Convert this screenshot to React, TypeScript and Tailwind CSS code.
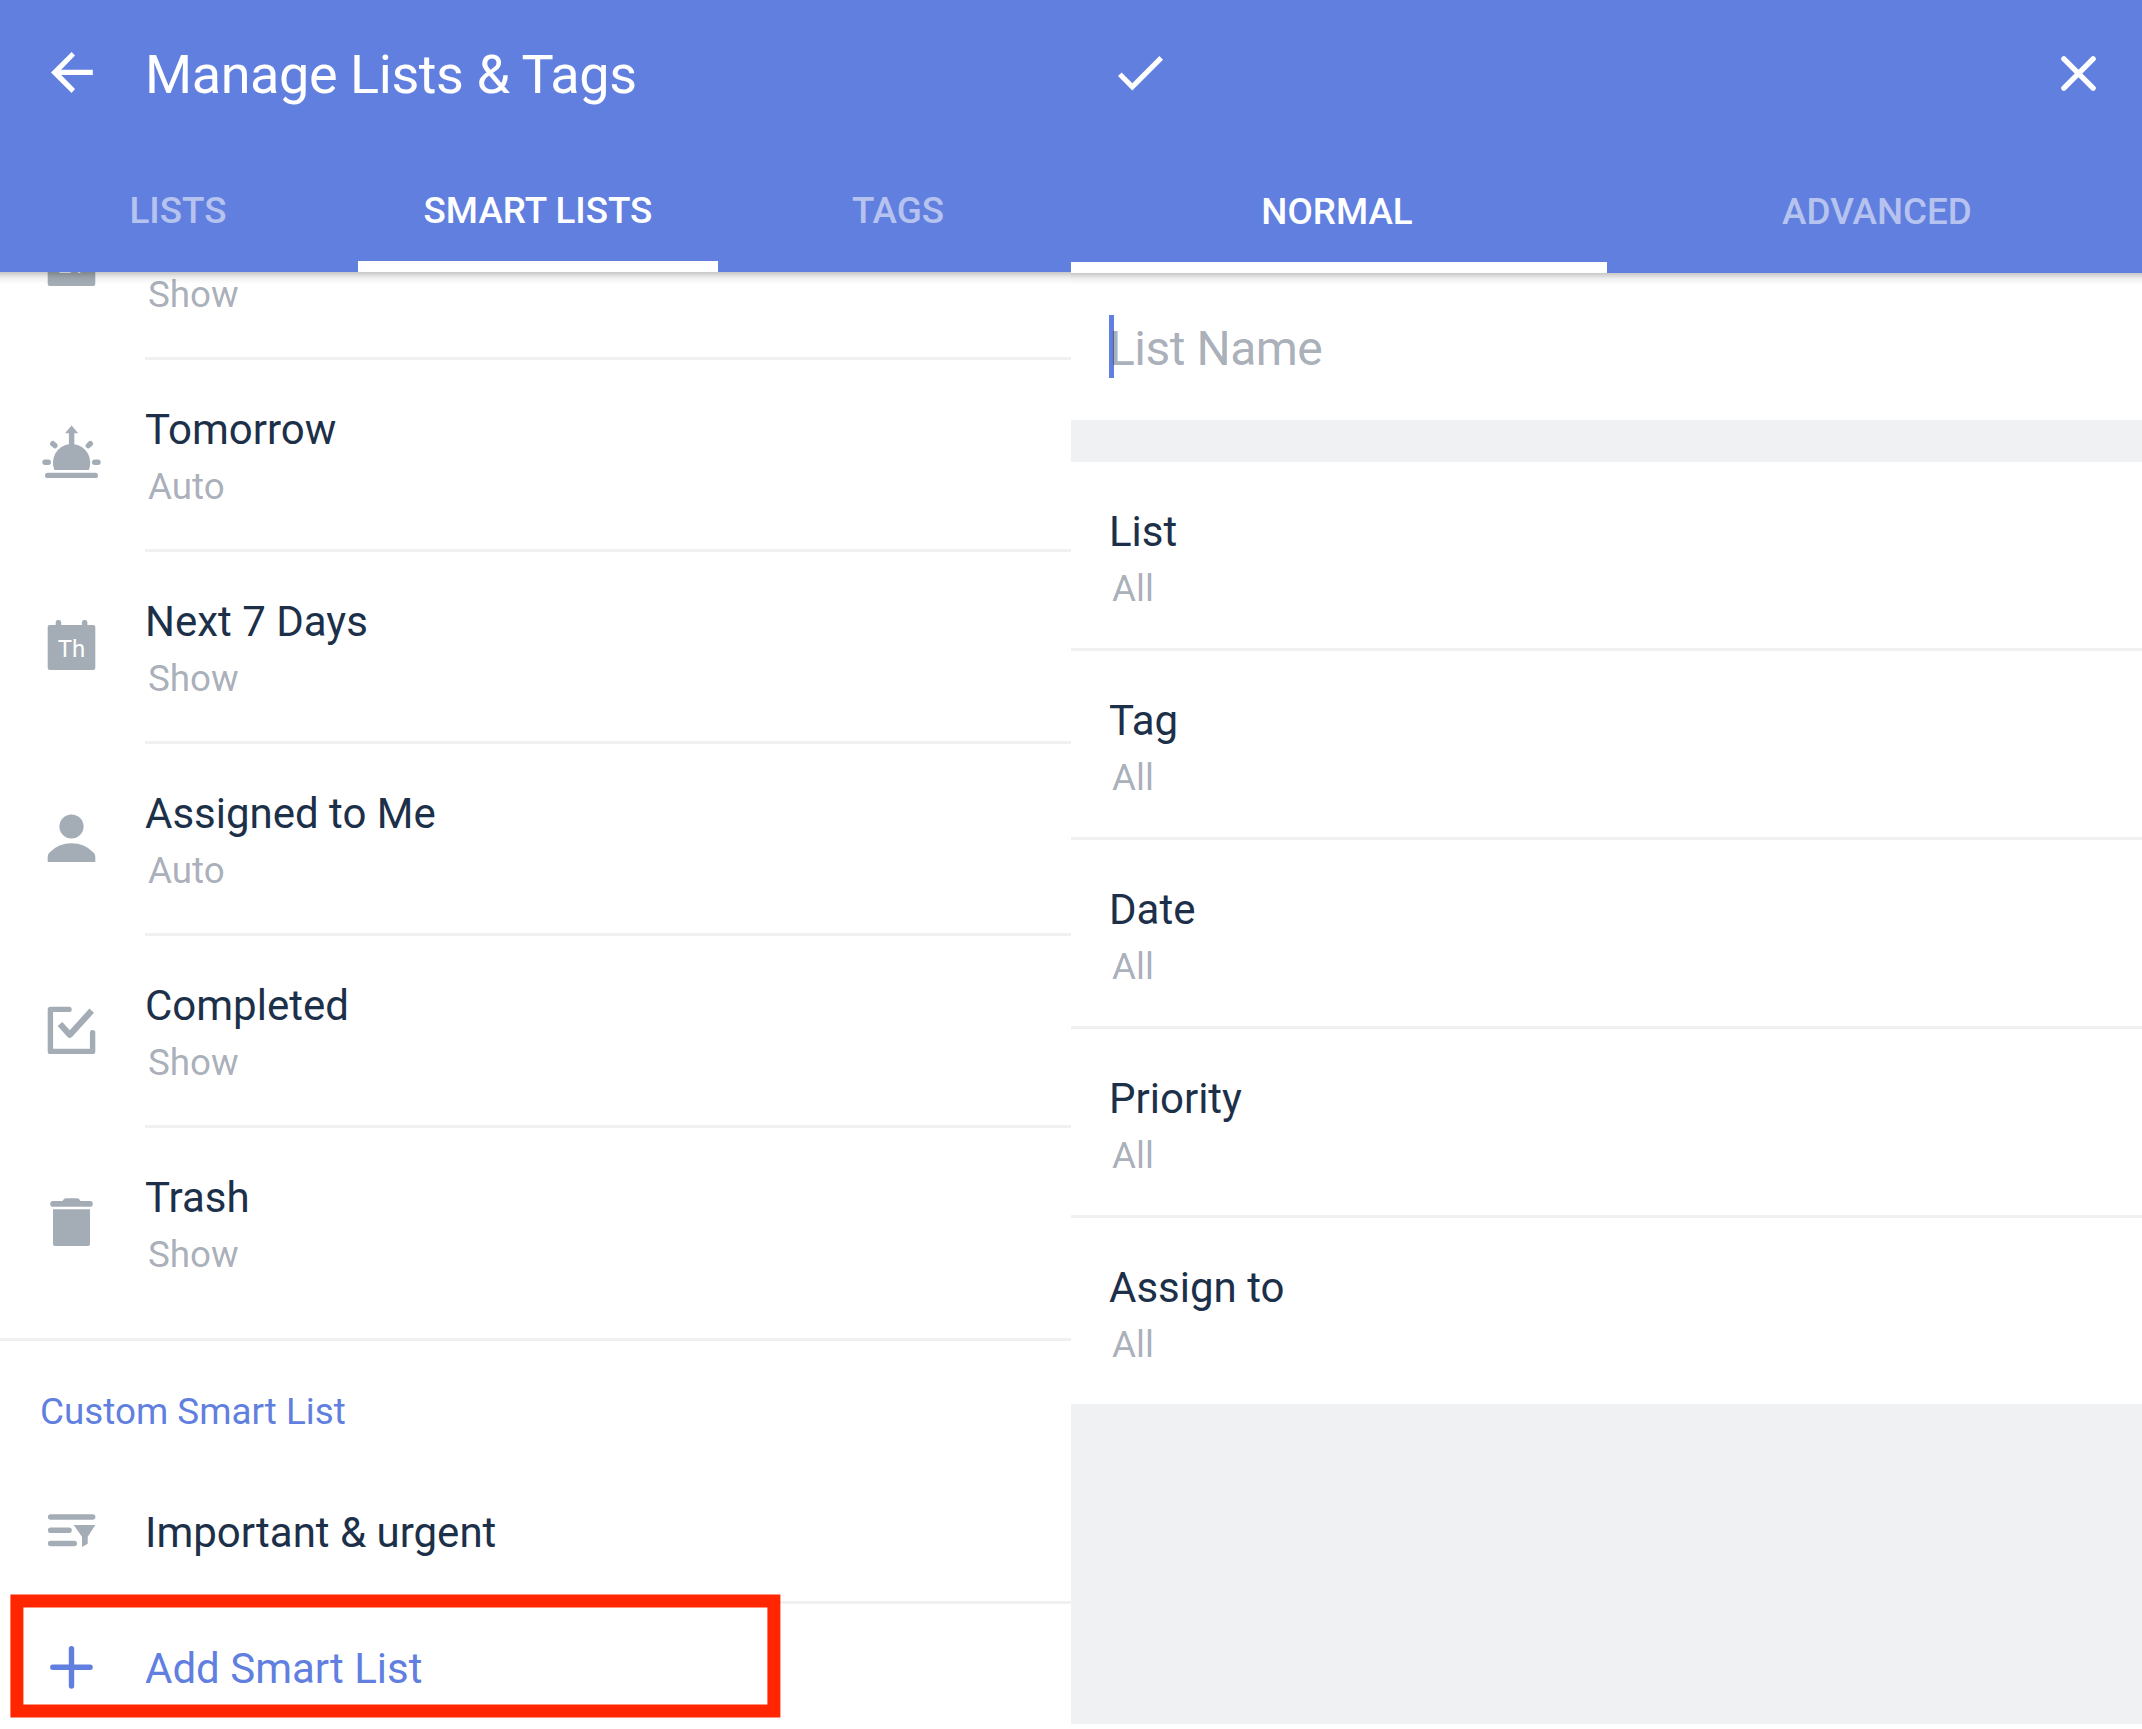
import type { ReactNode } from "react";

function Icon({ children }: { children: ReactNode }) {
  return (
    <svg className="block h-[72px] w-[72px]" viewBox="0 0 72 72" fill="none">
      {children}
    </svg>
  );
}

function CalendarIcon({ label }: { label: string }) {
  return (
    <Icon>
      <rect x="11.7" y="15" width="47.6" height="45" rx="2" fill="#a4adb6" />
      <rect x="19.7" y="10" width="5.5" height="9" rx="2.4" fill="#a4adb6" />
      <rect x="45.9" y="10" width="5.5" height="9" rx="2.4" fill="#a4adb6" />
      <text x="35.5" y="46.7" fill="#fff" fontSize="24" textAnchor="middle">
        {label}
      </text>
    </Icon>
  );
}

function SunriseIcon() {
  return (
    <Icon>
      <path
        d="M18.4 52A18.7 18.7 0 0 1 32.9 26.2V15.3H29L35.6 7.6L42.2 15.3H38.3V26.2A18.7 18.7 0 0 1 52.8 52Z"
        fill="#a4adb6"
      />
      <path
        d="M11.7 57.4H59.3M9 44.2H12.3M58.7 44.2H62M16.8 25.7L18.9 27.6M54.3 25.7L52.3 27.6"
        stroke="#a4adb6"
        strokeWidth="5.4"
        strokeLinecap="round"
      />
    </Icon>
  );
}

function PersonIcon() {
  return (
    <Icon>
      <circle cx="35.5" cy="24.5" r="12.1" fill="#a4adb6" />
      <path
        d="M11.7 60V54.5Q11.7 52 13.6 50.4Q22.5 41.3 35.5 41.3Q48.5 41.3 57.4 50.4Q59.3 52 59.3 54.5V60Z"
        fill="#a4adb6"
      />
    </Icon>
  );
}

function CompletedIcon() {
  return (
    <Icon>
      <path
        d="M33 15.4H14.4V57.4H56.6V38.8"
        stroke="#a4adb6"
        strokeWidth="5.4"
        strokeLinecap="round"
        strokeLinejoin="round"
      />
      <path d="M24 30L33.7 40.8L55.7 16.7" stroke="#a4adb6" strokeWidth="6.2" strokeLinejoin="round" />
    </Icon>
  );
}

function TrashIcon() {
  return (
    <Icon>
      <path d="M17 17.9H54" stroke="#a4adb6" strokeWidth="5.6" strokeLinecap="round" />
      <path d="M26.2 16Q27.5 12.3 30 12.3H41Q43.5 12.3 44.8 16Z" fill="#a4adb6" />
      <path d="M17 23.3H54V58Q54 60 52 60H19Q17 60 17 58Z" fill="#a4adb6" />
    </Icon>
  );
}

function FilterIcon() {
  return (
    <Icon>
      <path
        d="M14.7 21H56.6M14.7 34.3H33M14.7 47.5H38.2"
        stroke="#a4adb6"
        strokeWidth="5.6"
        strokeLinecap="round"
      />
      <path d="M37.7 29H59.3L51.7 40.7V47.7L46 51V40.7Z" fill="#a4adb6" />
    </Icon>
  );
}

function PlusIcon() {
  return (
    <Icon>
      <path d="M16.8 35.3H54.1M35.5 16.7V54" stroke="#617fdf" strokeWidth="5.4" strokeLinecap="round" />
    </Icon>
  );
}

function ItemText({ title, sub }: { title?: string; sub: string }) {
  return (
    <div className="pt-[45px]">
      <div className="h-[49px] text-[42px] leading-[49px] text-[#1d3049]">{title}</div>
      <div className="mt-[11px] pl-[3px] text-[36.8px] leading-[43px] text-[#1d3049]/40">{sub}</div>
    </div>
  );
}

const smartLists: { title?: string; sub: string; icon: ReactNode }[] = [
  { sub: "Show", icon: <CalendarIcon label="21" /> },
  { title: "Tomorrow", sub: "Auto", icon: <SunriseIcon /> },
  { title: "Next 7 Days", sub: "Show", icon: <CalendarIcon label="Th" /> },
  { title: "Assigned to Me", sub: "Auto", icon: <PersonIcon /> },
  { title: "Completed", sub: "Show", icon: <CompletedIcon /> },
];

const filters = ["List", "Tag", "Date", "Priority", "Assign to"];

function Shadow() {
  return (
    <div className="pointer-events-none absolute inset-x-0 top-full h-3 bg-linear-to-b from-black/22 via-black/6 to-transparent" />
  );
}

function ManagePanel() {
  return (
    <section className="relative h-[1729px] w-[1071px] overflow-hidden bg-white">
      <header className="relative z-10 h-[272px] bg-[#617fdf]">
        <div className="flex h-[176px] items-start">
          <svg className="mt-[51px] ml-[50px] h-[43px] w-[44px]" viewBox="50 51 44 43">
            <path
              d="M92.8 69.7V75H61.2L75 89L71.6 92.9L51 72.4L71.6 51.9L75 55.6L61.2 69.7Z"
              fill="#fff"
            />
          </svg>
          <h1 className="mt-[43px] ml-[51px] text-[54px] leading-[63px] tracking-[-0.43px] text-white">
            Manage Lists &amp; Tags
          </h1>
        </div>
        <nav className="-ml-0.5 flex h-24 w-[1080px] text-center text-[36.8px] leading-[43px] font-medium">
          <div className="w-[360px] pt-[13px] text-[#b6c3ef]">LISTS</div>
          <div className="h-full w-[360px] border-b-[11px] border-white pt-[13px] text-white">SMART LISTS</div>
          <div className="w-[360px] pt-[13px] text-[#b6c3ef]">TAGS</div>
        </nav>
        <Shadow />
      </header>
      <div className="-mt-[104px]">
        {smartLists.map((item, i) => (
          <div key={i} className="flex h-[192px] pl-9">
            <div className="w-[109px] pt-[58px]">{item.icon}</div>
            <div className="flex-1 border-b-3 border-[#f0f0f1]">
              <ItemText title={item.title} sub={item.sub} />
            </div>
          </div>
        ))}
        <div className="flex h-[213px] border-b-3 border-[#eff0f2] pl-9">
          <div className="w-[109px] pt-[58px]">
            <TrashIcon />
          </div>
          <ItemText title="Trash" sub="Show" />
        </div>
        <h2 className="h-[123px] pt-[49px] pl-10 text-[36.8px] leading-[43px] text-[#617fdf]">Custom Smart List</h2>
        <div className="flex h-[140px] pl-9">
          <div className="w-[109px] pt-8">
            <FilterIcon />
          </div>
          <div className="flex-1 border-b-3 border-[#f0f0f1] pt-11 text-[42px] leading-[49px] text-[#1d3049]">
            Important &amp; urgent
          </div>
        </div>
        <div className="flex h-[125px] pl-9">
          <div className="w-[109px] pt-7">
            <PlusIcon />
          </div>
          <div className="pt-10 text-[42px] leading-[49px] text-[#617fdf]">Add Smart List</div>
        </div>
      </div>
      <svg className="absolute top-[1590px] left-0 h-[132px] w-[790px]" viewBox="0 1590 790 132" fill="none">
        <rect x="16.9" y="1601" width="757" height="110" stroke="#ff2600" strokeWidth="13" />
      </svg>
    </section>
  );
}

function FilterPanel() {
  return (
    <section className="flex h-[1729px] w-[1071px] flex-col overflow-hidden bg-white">
      <header className="relative h-[273px] shrink-0 bg-[#617fdf]">
        <div className="flex h-[177px] items-start justify-between overflow-hidden pt-14 pr-[46px] pl-[47px]">
          <svg className="h-[34.5px] w-[45px]" viewBox="3.41 5.59 17.59 13.41">
            <path d="M9 16.17L4.83 12L3.41 13.41L9 19L21 7L19.59 5.59Z" fill="#fff" />
          </svg>
          <svg className="h-[35px] w-[35px]" viewBox="0 0 35 35">
            <path d="M2.9 2.9L32.1 32.1M32.1 2.9L2.9 32.1" stroke="#fff" strokeWidth="5.4" strokeLinecap="round" />
          </svg>
        </div>
        <nav className="-ml-1 flex h-24 w-[1075px] text-center text-[36.8px] leading-[43px] font-medium">
          <div className="h-full w-[540px] shrink-0 border-b-[11px] border-white pt-[13px] text-white">NORMAL</div>
          <div className="w-[535px] shrink-0 pt-[13px] pl-[5px] text-[#b6c3ef]">ADVANCED</div>
        </nav>
        <Shadow />
      </header>
      <div className="h-[147px] shrink-0 px-[38px] pt-[42px]">
        <div className="flex h-[63px] items-start">
          <span className="h-[63px] w-[5px] bg-[#617fdf]" />
          <span className="relative -ml-[5px] pt-[5px] text-[48px] leading-[57px] tracking-[-0.5px] text-[#1d3049]/40">
            List Name
          </span>
        </div>
      </div>
      <div className="h-[42px] shrink-0 bg-[#f0f1f3]" />
      <div className="shrink-0 divide-y-3 divide-[#f0f0f1]">
        {filters.map((name) => (
          <div key={name} className="h-[189px] pl-[38px] last:h-[186px]">
            <ItemText title={name} sub="All" />
          </div>
        ))}
      </div>
      <div className="h-[320px] shrink-0 bg-[#f0f1f3]" />
    </section>
  );
}

export default function App() {
  return (
    <main className="flex h-[1729px] w-[2142px] overflow-hidden bg-white font-[Roboto,sans-serif]">
      <ManagePanel />
      <FilterPanel />
    </main>
  );
}
